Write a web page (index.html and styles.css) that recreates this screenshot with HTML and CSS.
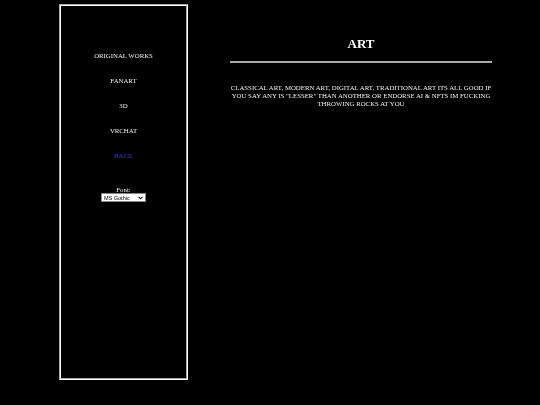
FILE: index.html
```html
<!DOCTYPE html>
<html lang="en">
<head>
  <meta charset="UTF-8">
  <title>ART</title>
  <link rel="stylesheet" href="styles.css">
</head>
<body>
  <div class="page">

    <!-- left menu -->
    <div class="sidebar">
      <ul class="nav">
        <li><a href="#">ORIGINAL WORKS</a></li>
        <li><a href="#">FANART</a></li>
        <li><a href="#">3D</a></li>
        <li><a href="#">VRCHAT</a></li>
        <li><a href="#" class="back">BACK</a></li>
      </ul>
      <div class="font-pick">
        <label for="fontSel">Font:</label>
        <span class="select-wrap">
          <select id="fontSel">
            <option>MS Gothic</option>
            <option>Times New Roman</option>
            <option>Arial</option>
          </select>
          <svg class="chev" width="5" height="4" viewBox="0 0 5 4"><path d="M0.5 0.8 L2.5 2.8 L4.5 0.8" fill="none" stroke="#000" stroke-width="1.1"/></svg>
        </span>
      </div>
    </div>

    <!-- main text -->
    <div class="main">
      <h1>ART</h1>
      <hr>
      <p>CLASSICAL ART, MODERN ART, DIGITAL ART, TRADITIONAL ART ITS ALL GOOD IF YOU SAY ANY IS "LESSER" THAN ANOTHER OR ENDORSE AI &amp; NFTS IM FUCKING THROWING ROCKS AT YOU</p>
    </div>

  </div>
</body>
</html>
```

FILE: styles.css
```css
body { background: #000; color: #f0f0f0; font-family: "Liberation Serif", "Times New Roman", serif; margin: 0; }
.page { display: flex; padding: 4px 0 0 59px; will-change: transform; }
.sidebar { width: 125px; height: 372px; border: 2px groove #fff; text-align: center; font-size: 6.8px; }
.nav { list-style: none; margin: 46px 0 0; padding: 0; }
.nav li { height: 25px; }
.nav a { color: #f0f0f0; text-decoration: none; }
.nav a.back { color: #3a3ad0; }
.font-pick { margin-top: 9px; }
.font-pick label { display: block; line-height: 7px; }
.select-wrap { position: relative; display: inline-block; margin-top: 0; }
.font-pick select { appearance: none; -webkit-appearance: none; display: block; font-family: "Liberation Sans", Arial, sans-serif; font-size: 5.5px; width: 45px; height: 9px; padding: 0 0 0 2px; background: #fff; color: #000; border: 1px solid #888; border-radius: 0; }
.chev { position: absolute; right: 3px; top: 3px; }
.main { width: 262px; margin-left: 42px; text-align: center; }
h1 { font-size: 13px; line-height: 15px; margin: 32px 0 0; color: #fff; }
hr { border: none; border-top: 2px solid #aaa; margin: 10px 0 0; }
p { font-size: 6.8px; line-height: 8px; margin: 21px 0 0; }
```
